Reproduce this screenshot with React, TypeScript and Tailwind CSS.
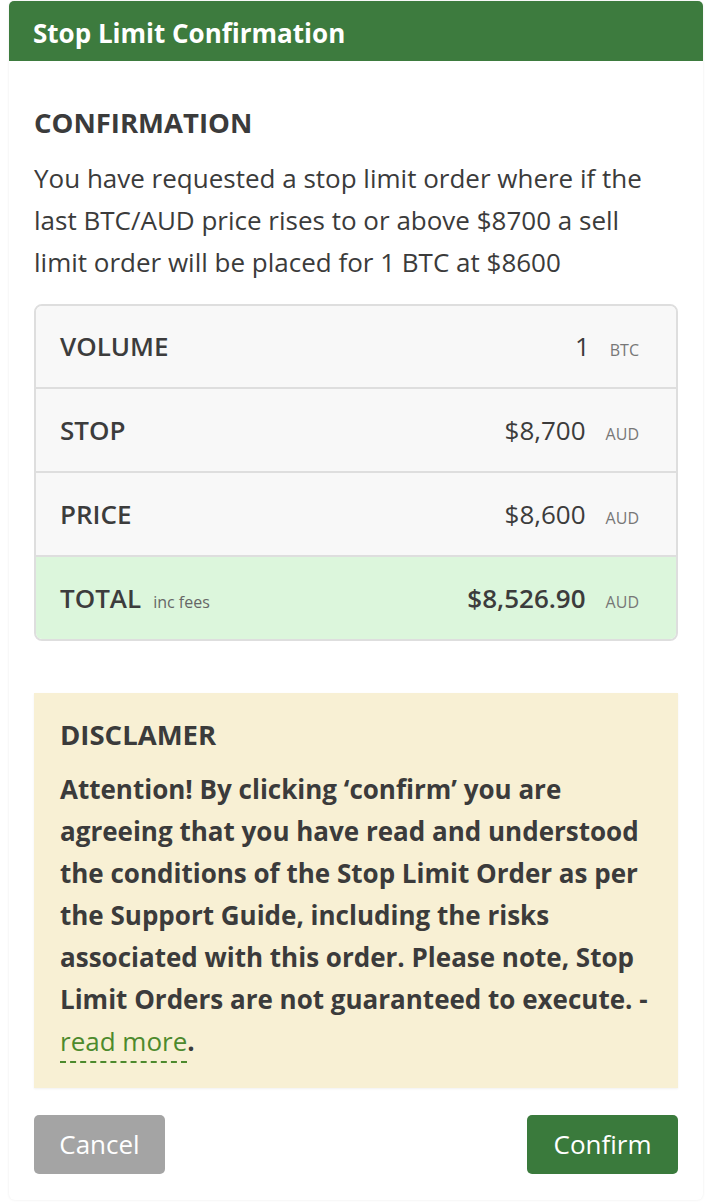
import React from "react";

type Row = { label: string; value: string; unit: string; note?: string; total?: boolean };

const rows: Row[] = [
  { label: "VOLUME", value: "1", unit: "BTC" },
  { label: "STOP", value: "$8,700", unit: "AUD" },
  { label: "PRICE", value: "$8,600", unit: "AUD" },
  { label: "TOTAL", value: "$8,526.90", unit: "AUD", note: "inc fees", total: true },
];

function OrderTable() {
  return (
    <div className="mt-[21px] rounded-[8px] border-2 border-[#dedede] overflow-hidden">
      {rows.map((r, i) => (
        <div
          key={r.label}
          className={`h-[81px] flex items-center justify-between pl-6 pr-[37px] ${
            i > 0 ? "border-t-2 border-[#dedede] h-[84px]" : ""
          } ${r.total ? "bg-[#dcf6dc]" : "bg-[#f8f8f8]"}`}
        >
          <div className="flex items-baseline gap-3">
            <span className="text-[26px] font-semibold text-[#3c3c3c]">{r.label}</span>
            {r.note && <span className="text-[16px] text-[#666]">{r.note}</span>}
          </div>
          <div className="flex items-baseline gap-5">
            <span className={`text-[26px] text-[#3c3c3c] ${r.total ? "font-semibold" : ""}`}>
              {r.value}
            </span>
            <span className="text-[16px] text-[#777]">{r.unit}</span>
          </div>
        </div>
      ))}
    </div>
  );
}

export default function App() {
  return (
    <div
      className="min-h-[1202px] bg-white pt-[1px]"
      style={{ fontFamily: '"Open Sans", "Noto Sans", sans-serif' }}
    >
      <div className="ml-[9px] mr-[4px] bg-white rounded-[6px] shadow-[0_0_3px_rgba(0,0,0,0.08)] pb-[26px]">
        {/* header */}
        <div className="h-[60px] bg-[#3d7b3e] rounded-t-[5px] px-6 pt-[3px] flex items-center">
          <h1 className="text-[26px] font-bold text-white leading-none">
            Stop Limit Confirmation
          </h1>
        </div>

        <div className="px-[25px] text-[#3b3b3b]">
          <h2 className="pt-[45px] text-[27.5px] leading-[34px] font-bold">CONFIRMATION</h2>
          <p className="mt-[17px] pr-[10px] text-[26px] leading-[42px]">
            You have requested a stop limit order where if the last BTC/AUD price rises to or
            above $8700 a sell limit order will be placed for 1 BTC at $8600
          </p>

          <OrderTable />

          {/* disclaimer */}
          <div className="mt-[52px] bg-[#f8f0d4] shadow-[0_1px_2px_rgba(0,0,0,0.06)] pl-[26px] pr-[16px] pt-[25px] pb-[26px]">
            <h3 className="text-[27.5px] leading-[34px] font-bold">DISCLAMER</h3>
            <p className="mt-4 text-[26px] leading-[42px] font-bold">
              Attention! By clicking ‘confirm’ you are agreeing that you have read and understood
              the conditions of the Stop Limit Order as per the Support Guide, including the risks
              associated with this order. Please note, Stop Limit Orders are not guaranteed to
              execute. -{" "}
              <a
                href="#"
                className="font-normal text-[#4d8a2d] no-underline border-b-2 border-dashed border-[#4d8a2d] pb-[2px]"
              >
                read more
              </a>
              .
            </p>
          </div>

          {/* actions */}
          <div className="mt-[27px] flex justify-between">
            <button className="h-[59px] w-[131px] rounded-[5px] bg-[#a4a4a4] text-white text-[26px]">
              Cancel
            </button>
            <button className="h-[59px] w-[151px] rounded-[5px] bg-[#3a7a3c] text-white text-[26px]">
              Confirm
            </button>
          </div>
        </div>
      </div>
    </div>
  );
}
